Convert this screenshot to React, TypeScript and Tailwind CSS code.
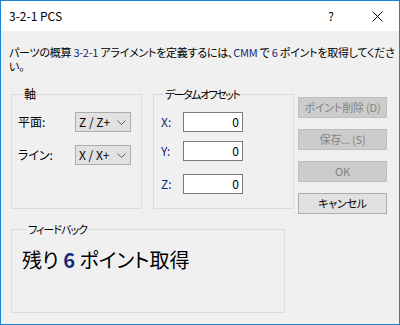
import React from "react";

const font = { fontFamily: '"Noto Sans CJK JP", "Noto Sans", sans-serif' };

function Combo({ value }: { value: string }) {
  return (
    <div className="w-[56px] h-[20px] bg-[#e1e1e1] border border-[#adadad] flex items-center justify-between pl-[3px] pr-[4px] text-[12px] text-black">
      <span className="leading-none">{value}</span>
      <svg width="9" height="5" viewBox="0 0 9 5" className="mt-[1px]">
        <path d="M0.5 0.5 L4.5 4.5 L8.5 0.5" fill="none" stroke="#606060" strokeWidth="1" />
      </svg>
    </div>
  );
}

function Field({ label, mt }: { label: string; mt: string }) {
  return (
    <div className={`flex items-center h-[20px] ${mt}`}>
      <span className="w-[22px] text-[12px] leading-none text-[#14287a]">{label}</span>
      <div className="w-[60px] h-[20px] bg-white border border-[#7a7a7a] flex items-center justify-end pr-[3px] text-[12px] leading-none">
        0
      </div>
    </div>
  );
}

function Btn({ label, disabled, mt }: { label: string; disabled?: boolean; mt?: string }) {
  return (
    <div
      className={`w-[89px] h-[21px] flex items-center justify-center text-[11px] leading-none border tracking-[-0.2px] ${mt ?? ""} ${
        disabled ? "bg-[#cccccc] border-[#bfbfbf] text-[#838383]" : "bg-[#e1e1e1] border-[#adadad] text-black"
      }`}
    >
      {label}
    </div>
  );
}

export default function App() {
  return (
    <div
      className="w-[400px] h-[325px] border border-[#1883d7] bg-[#f0f0f0] flex flex-col text-black [font-feature-settings:'palt']"
      style={font}
    >
      <div className="h-[30px] bg-white flex items-center pl-[8px] pr-[16px] text-[12px]">
        <span className="flex-1">3-2-1 PCS</span>
        <span className="mr-[38px]">?</span>
        <svg width="11" height="11" viewBox="0 0 11 11">
          <path d="M0.5 0.5 L10.5 10.5 M10.5 0.5 L0.5 10.5" stroke="#000" strokeWidth="1" />
        </svg>
      </div>
      <div className="pl-[8px] pt-[14px] text-[11px] leading-[14px] tracking-[-0.25px]">
        <div className="whitespace-nowrap">
          パーツの概算 <span className="text-[#14287a]">3-2-1</span> アライメントを定義するには、
          <span className="text-[#14287a]">CMM</span> で <span className="text-[#14287a]">6</span> ポイントを取得してくださ
        </div>
        <div>い。</div>
      </div>
      <div className="flex pl-[10px] mt-[14px]">
        <fieldset className="w-[131px] h-[122px] border border-[#dcdcdc] pl-[6px]">
          <legend className="ml-[5px] px-[1px] text-[12px] leading-[14px]">軸</legend>
          <div className="flex items-center h-[20px] mt-[11px]">
            <span className="w-[57px] text-[12px] leading-none">平面:</span>
            <Combo value="Z / Z+" />
          </div>
          <div className="flex items-center h-[20px] mt-[13px]">
            <span className="w-[57px] text-[12px] leading-none">ライン:</span>
            <Combo value="X / X+" />
          </div>
        </fieldset>
        <fieldset className="ml-[11px] w-[141px] h-[122px] border border-[#dcdcdc] pl-[7px]">
          <legend className="ml-[3px] px-[1px] text-[11px] leading-[14px] tracking-[-1.5px]">データムオフセット</legend>
          <Field label="X:" mt="mt-[11px]" />
          <Field label="Y:" mt="mt-[9px]" />
          <Field label="Z:" mt="mt-[13px]" />
        </fieldset>
        <div className="ml-[4px] flex flex-col pt-[10px]">
          <Btn label="ポイント削除 (D)" disabled />
          <Btn label="保存... (S)" disabled mt="mt-[11px]" />
          <Btn label="OK" disabled mt="mt-[11px]" />
          <Btn label="キャンセル" mt="mt-[11px]" />
        </div>
      </div>
      <div className="pl-[10px] mt-[8px]">
        <fieldset className="w-[274px] h-[91px] border border-[#dcdcdc] pl-[10px]">
          <legend className="ml-[5px] px-[1px] text-[11px] leading-[14px] tracking-[-1px]">フィードバック</legend>
          <div className="mt-[14px] text-[20px] leading-none">
            残り <span className="font-bold text-[#14287a]">6</span> ポイント取得
          </div>
        </fieldset>
      </div>
    </div>
  );
}
